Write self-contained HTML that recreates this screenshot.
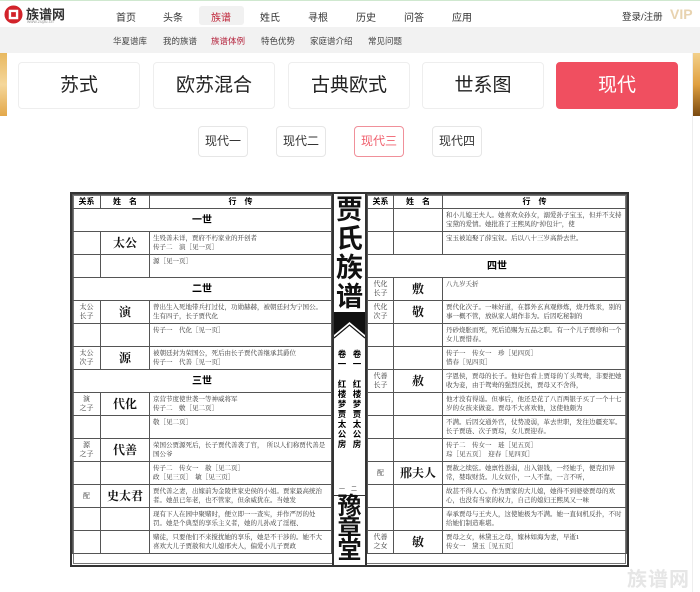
<!DOCTYPE html>
<html><head><meta charset="utf-8">
<style>
*{margin:0;padding:0;box-sizing:border-box}
body{width:700px;height:592px;overflow:hidden;background:#fff;font-family:"Liberation Sans","Noto Sans CJK SC",sans-serif;position:relative}
.top{position:absolute;left:0;top:0;width:700px;height:27px;background:#fff;border-top:1px solid #cfe8cf}
.nav a{position:absolute;top:8px;font-size:10px;color:#333;text-decoration:none}
.sub{position:absolute;left:0;top:27px;width:700px;height:26px;background:#f2f2f2}
.sub span{position:absolute;top:8px;font-size:8.5px;color:#444}
.deco{position:absolute;left:0;top:53px;width:7px;height:63px;background:linear-gradient(#e8b860,#f5d79a,#e3a84a)}
.deco2{position:absolute;right:0;top:53px;width:7px;height:63px;background:linear-gradient(#f3d08a,#e0a040,#7a4a10)}
.tab{position:absolute;top:62px;height:47px;width:122px;border:1px solid #eee;border-radius:4px;font-size:19px;color:#222;text-align:center;line-height:45px;background:#fff}
.st{position:absolute;top:126px;height:31px;width:50px;border:1px solid #e6e6e6;border-radius:4px;font-size:12px;color:#333;text-align:center;line-height:29px}
.book{position:absolute;left:70px;top:192px;width:559px;height:375px;border:2px solid #333;outline:1px solid #777;outline-offset:-4px}
table{position:absolute;border-collapse:collapse;table-layout:fixed;font-family:"Liberation Serif","Noto Serif CJK SC",serif}
td{border:1px solid #555;height:23px;font-size:6.5px;color:#333;line-height:9px;vertical-align:top;padding:2px 3px;overflow:hidden}
td.h{font-weight:bold;font-size:8px;text-align:center;vertical-align:middle;height:14px;padding:0;color:#000;font-family:"Liberation Sans","Noto Sans CJK SC",sans-serif}
td.g{font-weight:bold;font-size:10px;text-align:center;vertical-align:middle;color:#000;font-family:"Liberation Sans","Noto Sans CJK SC",sans-serif}
td.r{text-align:center;vertical-align:middle;font-size:7px;padding:0}
td.n{text-align:center;vertical-align:middle;font-size:12px;font-weight:bold;color:#111;padding:0}
.mid{position:absolute;left:260px;top:0;width:35px;height:371px;border-left:2px solid #333;border-right:2px solid #333;background:#fff}
.wm{position:absolute;left:627px;top:563px;font-size:20px;color:#e6e6e6;font-weight:bold;letter-spacing:1px}
</style></head><body>
<div class="top">
 <svg style="position:absolute;left:4px;top:4px" width="19" height="19" viewBox="0 0 20 20"><circle cx="10" cy="10" r="9.5" fill="#d2232a"/><rect x="5" y="5" width="10" height="10" fill="#fff"/><rect x="7.5" y="7.5" width="5" height="5" fill="#d2232a"/></svg>
 <div style="position:absolute;left:26px;top:3px;font-size:13px;font-weight:bold;color:#333">族谱网</div>
 <div style="position:absolute;left:27px;top:18px;font-size:4.5px;color:#999">www.zupu.cn</div>
 <div style="position:absolute;left:199px;top:5px;width:45px;height:19px;background:#f1f1f1;border-radius:3px"></div>
 <div class="nav">
 <a style="left:116px">首页</a><a style="left:163px">头条</a><a style="left:211px;color:#c0273a">族谱</a>
 <a style="left:260px">姓氏</a><a style="left:308px">寻根</a><a style="left:356px">历史</a><a style="left:404px">问答</a><a style="left:452px">应用</a>
 <a style="left:622px;font-size:9.5px">登录/注册</a>
 <a style="left:670px;top:5px;font-size:14px;color:#e8d3b0;font-weight:bold">VIP</a>
 </div>
</div>
<div class="sub">
 <span style="left:113px">华夏谱库</span><span style="left:163px">我的族谱</span><span style="left:211px;color:#b3203a">族谱体例</span><span style="left:261px">特色优势</span><span style="left:310px">家庭谱介绍</span><span style="left:368px">常见问题</span>
</div>
<div class="deco"></div><div class="deco2"></div>
<div style="position:absolute;left:7px;top:53px;width:686px;height:539px;background:#fff;border-right:1px solid #eee"></div>
<div class="tab" style="left:18px">苏式</div>
<div class="tab" style="left:153px">欧苏混合</div>
<div class="tab" style="left:288px">古典欧式</div>
<div class="tab" style="left:422px">世系图</div>
<div class="tab" style="left:556px;background:#f04f60;color:#fff;border-color:#f04f60">现代</div>
<div class="st" style="left:198px">现代一</div>
<div class="st" style="left:276px">现代二</div>
<div class="st" style="left:354px;color:#f0606e;border-color:#f0909a">现代三</div>
<div class="st" style="left:432px">现代四</div>

<div class="book">
<table style="left:0;top:0;width:260px">
<colgroup><col style="width:28px"><col style="width:49px"><col></colgroup>
<tr><td class="h">关系</td><td class="h">姓　名</td><td class="h">行　传</td></tr>
<tr><td class="g" colspan="3">一世</td></tr>
<tr><td></td><td class="n">太公</td><td>生殁善未详，贾府不朽家业的开创者<br>传子二　演［见一页］</td></tr>
<tr><td></td><td></td><td>源［见一页］</td></tr>
<tr><td class="g" colspan="3">二世</td></tr>
<tr><td class="r">太公<br>长子</td><td class="n">演</td><td>曾出生入死地带兵打过仗，功勋赫赫，被朝廷封为宁国公。生有四子，长子贾代化</td></tr>
<tr><td></td><td></td><td>传子一　代化［见一页］</td></tr>
<tr><td class="r">太公<br>次子</td><td class="n">源</td><td>被朝廷封为荣国公，死后由长子贾代善继承其爵位<br>传子一　代善［见一页］</td></tr>
<tr><td class="g" colspan="3">三世</td></tr>
<tr><td class="r">演<br>之子</td><td class="n">代化</td><td>京营节度使世袭一等神威将军<br>传子二　敷［见二页］</td></tr>
<tr><td></td><td></td><td>敬［见二页］</td></tr>
<tr><td class="r">源<br>之子</td><td class="n">代善</td><td>荣国公贾源死后，长子贾代善袭了官，　所以人们称贾代善是国公爷</td></tr>
<tr><td></td><td></td><td>传子二　传女一　赦［见二页］<br>政［见三页］　敏［见三页］</td></tr>
<tr><td class="r">配</td><td class="n">史太君</td><td>贾代善之妻，出嫁前为金陵世家史侯的小姐。贾家最高统治者。她虽已年老，也不管家，但余威犹在。当她发</td></tr>
<tr><td></td><td></td><td>现有下人在园中聚赌时，便立即一一查实，并作严厉的处罚。她是个典型的享乐主义者，她的儿孙成了淫棍、</td></tr>
<tr><td></td><td></td><td>赌徒，只要他们不来搅扰她的享乐，她是不干涉的。她不大喜欢大儿子贾赦和大儿媳邢夫人，偏爱小儿子贾政</td></tr>
</table>
<div class="mid">
 <div style="position:absolute;left:0;top:2px;width:31px;text-align:center;font-size:27px;line-height:29px;font-weight:bold;color:#111">贾<br>氏<br>族<br>谱</div>
 <svg style="position:absolute;left:0;top:118px" width="31" height="36" viewBox="0 0 31 36"><rect width="31" height="36" fill="#111"/><polygon points="0,23 15.5,10 31,23 31,36 0,36" fill="#fff"/><polyline points="0,26 15.5,13 31,26" fill="none" stroke="#111" stroke-width="1.2"/></svg>
 <div style="position:absolute;left:2px;top:155px;font-size:8.5px;font-weight:bold;line-height:10px;width:12px;text-align:center">卷<br>一<br><br>红<br>楼<br>梦<br>贾<br>太<br>公<br>房</div>
 <div style="position:absolute;left:17px;top:155px;font-size:8.5px;font-weight:bold;line-height:10px;width:12px;text-align:center">卷<br>一<br><br>红<br>楼<br>梦<br>贾<br>太<br>公<br>房</div>
 <div style="position:absolute;left:5px;top:290px;font-size:6px;color:#444">一　二</div>
 <div style="position:absolute;left:0;top:301px;width:31px;border-top:1.5px solid #333"></div>
 <div style="position:absolute;left:0;top:302px;width:31px;text-align:center;font-size:24px;line-height:22px;font-weight:bold;color:#111">豫<br>章<br>堂</div>
</div>
<table style="left:295px;top:0;width:260px">
<colgroup><col style="width:26px"><col style="width:49px"><col></colgroup>
<tr><td class="h">关系</td><td class="h">姓　名</td><td class="h">行　传</td></tr>
<tr><td></td><td></td><td>和小儿媳王夫人。她喜欢众孙女，溺爱孙子宝玉，但并不支持宝黛的爱情。她批准了王熙凤的"掉包计"，使</td></tr>
<tr><td></td><td></td><td>宝玉被迫娶了薛宝钗。后以八十三岁高龄去世。</td></tr>
<tr><td class="g" colspan="3">四世</td></tr>
<tr><td class="r">代化<br>长子</td><td class="n">敷</td><td>八九岁夭折</td></tr>
<tr><td class="r">代化<br>次子</td><td class="n">敬</td><td>贾代化次子。一味好道，在都外玄真观修炼，烧丹炼汞，别的事一概不管，放纵家人胡作非为。后因吃秘制的</td></tr>
<tr><td></td><td></td><td>丹砂烧胀而死，死后追赐为五品之职。有一个儿子贾珍和一个女儿贾惜春。</td></tr>
<tr><td></td><td></td><td>传子一　传女一　珍［见四页］<br>惜春［见四页］</td></tr>
<tr><td class="r">代善<br>长子</td><td class="n">赦</td><td>字恩侯，贾母的长子。他好色看上贾母的丫头鸳鸯，非要把她收为妾，由于鸳鸯的强烈反抗，贾母又不舍得，</td></tr>
<tr><td></td><td></td><td>他才没有得逞。但事后，他还是花了八百两银子买了一个十七岁的女孩来做妾。贾母不大喜欢他，这使他颇为</td></tr>
<tr><td></td><td></td><td>不满。后因交通外官，仗势凌弱，革去世职，发往边疆充军。长子贾琏、次子贾琮，女儿贾迎春。</td></tr>
<tr><td></td><td></td><td>传子二　传女一　琏［见五页］<br>琮［见五页］　迎春［见四页］</td></tr>
<tr><td class="r">配</td><td class="n">邢夫人</td><td>贾赦之续弦。她禀性愚弱，出入银钱，一经她手，便克扣异常，婪取财货。儿女奴仆，一人不靠，一言不听，</td></tr>
<tr><td></td><td></td><td>故甚不得人心。作为贾家的大儿媳，她得不到婆婆贾母的欢心，也没有当家的权力，自己的媳妇王熙凤又一味</td></tr>
<tr><td></td><td></td><td>奉承贾母与王夫人，这使她极为不满。她一直伺机反扑，不时给她们制造难堪。</td></tr>
<tr><td class="r">代善<br>之女</td><td class="n">敏</td><td>贾母之女，林黛玉之母，嫁林如海为妻，早逝1<br>传女一　黛玉［见五页］</td></tr>
</table>
</div>
<div class="wm">族谱网</div>
</body></html>
